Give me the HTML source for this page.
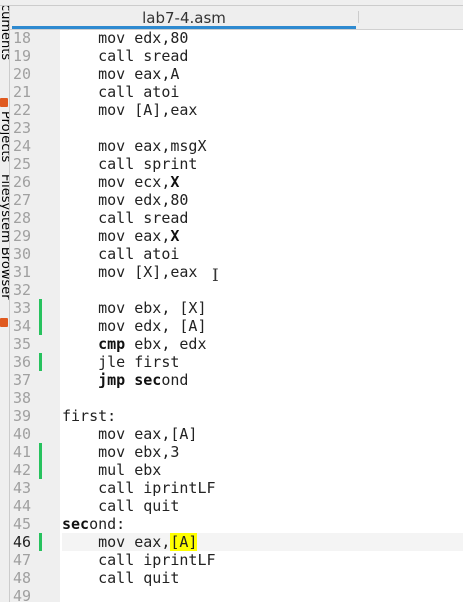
<!DOCTYPE html>
<html><head><meta charset="utf-8"><style>
body{margin:0;width:463px;height:602px;overflow:hidden;background:#fff;position:relative;font-family:"DejaVu Sans Mono","Liberation Mono",monospace}
.top{position:absolute;left:0;top:0;width:463px;height:5px;background:#efefef;border-bottom:1px solid #ccc}
.tabbar{position:absolute;left:10px;top:6px;width:453px;height:23px;background:#eeeeee;border-bottom:1px solid #d0d0d0}
.tab{position:absolute;left:12px;top:8px;width:344px;height:20px;font:15px "DejaVu Sans",sans-serif;color:#333;text-align:center;line-height:20px}
.blue{position:absolute;left:12px;top:26px;width:344px;height:3px;background:#2e8ad0}
.sep{position:absolute;left:358px;top:11px;width:1px;height:12px;background:#ccc}
.side{position:absolute;left:0;top:6px;width:9px;height:596px;background:#efefef;border-right:1px solid #ccc;overflow:hidden}
.side span{position:absolute;left:-2px;writing-mode:vertical-rl;font:13px "DejaVu Sans",sans-serif;color:#000;white-space:nowrap}
.ic{position:absolute;left:0;width:8px;height:9px;background:#e05a20;border-radius:1px}
.gut{position:absolute;left:10px;top:30px;width:50px;height:572px;background:#efefef}
.code{position:absolute;left:0;top:29px;width:463px}
.l{position:relative;height:18px;line-height:18px;font-size:15px;white-space:pre;color:#222}
.n{position:absolute;left:13px;top:0;color:#a0a0a0;font-size:15px}
.t{position:absolute;left:62px;top:0}
.g{position:absolute;left:39px;top:0;width:3px;height:18px;background:#27c25e}
b{font-weight:bold;color:#111}
.cur{background:#f4f4f4}
.hl{background:#ffff00}
</style></head><body>
<div class="top"></div>
<div class="side">
<span style="top:-20px">Documents</span>
<div class="ic" style="top:92px"></div>
<span style="top:105px">Projects</span>
<span style="top:168px">Filesystem Browser</span>
<div class="ic" style="top:312px"></div>
</div>
<div class="tabbar"></div>
<div class="tab">lab7-4.asm</div>
<div class="blue"></div><div class="sep"></div>
<div class="gut"></div>
<div class="code">
<div class="l"><span class="n">18</span><span class="t">    mov edx,80</span></div>
<div class="l"><span class="n">19</span><span class="t">    call sread</span></div>
<div class="l"><span class="n">20</span><span class="t">    mov eax,A</span></div>
<div class="l"><span class="n">21</span><span class="t">    call atoi</span></div>
<div class="l"><span class="n">22</span><span class="t">    mov [A],eax</span></div>
<div class="l"><span class="n">23</span></div>
<div class="l"><span class="n">24</span><span class="t">    mov eax,msgX</span></div>
<div class="l"><span class="n">25</span><span class="t">    call sprint</span></div>
<div class="l"><span class="n">26</span><span class="t">    mov ecx,<b>X</b></span></div>
<div class="l"><span class="n">27</span><span class="t">    mov edx,80</span></div>
<div class="l"><span class="n">28</span><span class="t">    call sread</span></div>
<div class="l"><span class="n">29</span><span class="t">    mov eax,<b>X</b></span></div>
<div class="l"><span class="n">30</span><span class="t">    call atoi</span></div>
<div class="l"><span class="n">31</span><span class="t">    mov [X],eax</span><span style="position:absolute;left:212px;top:3px;font:17px 'DejaVu Serif',serif;color:#333">I</span></div>
<div class="l"><span class="n">32</span></div>
<div class="l"><span class="n">33</span><span class="g"></span><span class="t">    mov ebx, [X]</span></div>
<div class="l"><span class="n">34</span><span class="g"></span><span class="t">    mov edx, [A]</span></div>
<div class="l"><span class="n">35</span><span class="t">    <b>cmp</b> ebx, edx</span></div>
<div class="l"><span class="n">36</span><span class="g"></span><span class="t">    jle first</span></div>
<div class="l"><span class="n">37</span><span class="t">    <b>jmp</b> <b>sec</b>ond</span></div>
<div class="l"><span class="n">38</span></div>
<div class="l"><span class="n">39</span><span class="t">first:</span></div>
<div class="l"><span class="n">40</span><span class="t">    mov eax,[A]</span></div>
<div class="l"><span class="n">41</span><span class="g"></span><span class="t">    mov ebx,3</span></div>
<div class="l"><span class="n">42</span><span class="g"></span><span class="t">    mul ebx</span></div>
<div class="l"><span class="n">43</span><span class="t">    call iprintLF</span></div>
<div class="l"><span class="n">44</span><span class="t">    call quit</span></div>
<div class="l"><span class="n">45</span><span class="t"><b>sec</b>ond:</span></div>
<div class="l"><div class="cur" style="position:absolute;left:62px;top:0;width:401px;height:18px"></div><span class="n" style="color:#222">46</span><span class="g"></span><span class="t">    mov eax,<span class="hl">[A]</span></span></div>
<div class="l"><span class="n">47</span><span class="t">    call iprintLF</span></div>
<div class="l"><span class="n">48</span><span class="t">    call quit</span></div>
<div class="l"><span class="n">49</span></div>
</div>
</body></html>
